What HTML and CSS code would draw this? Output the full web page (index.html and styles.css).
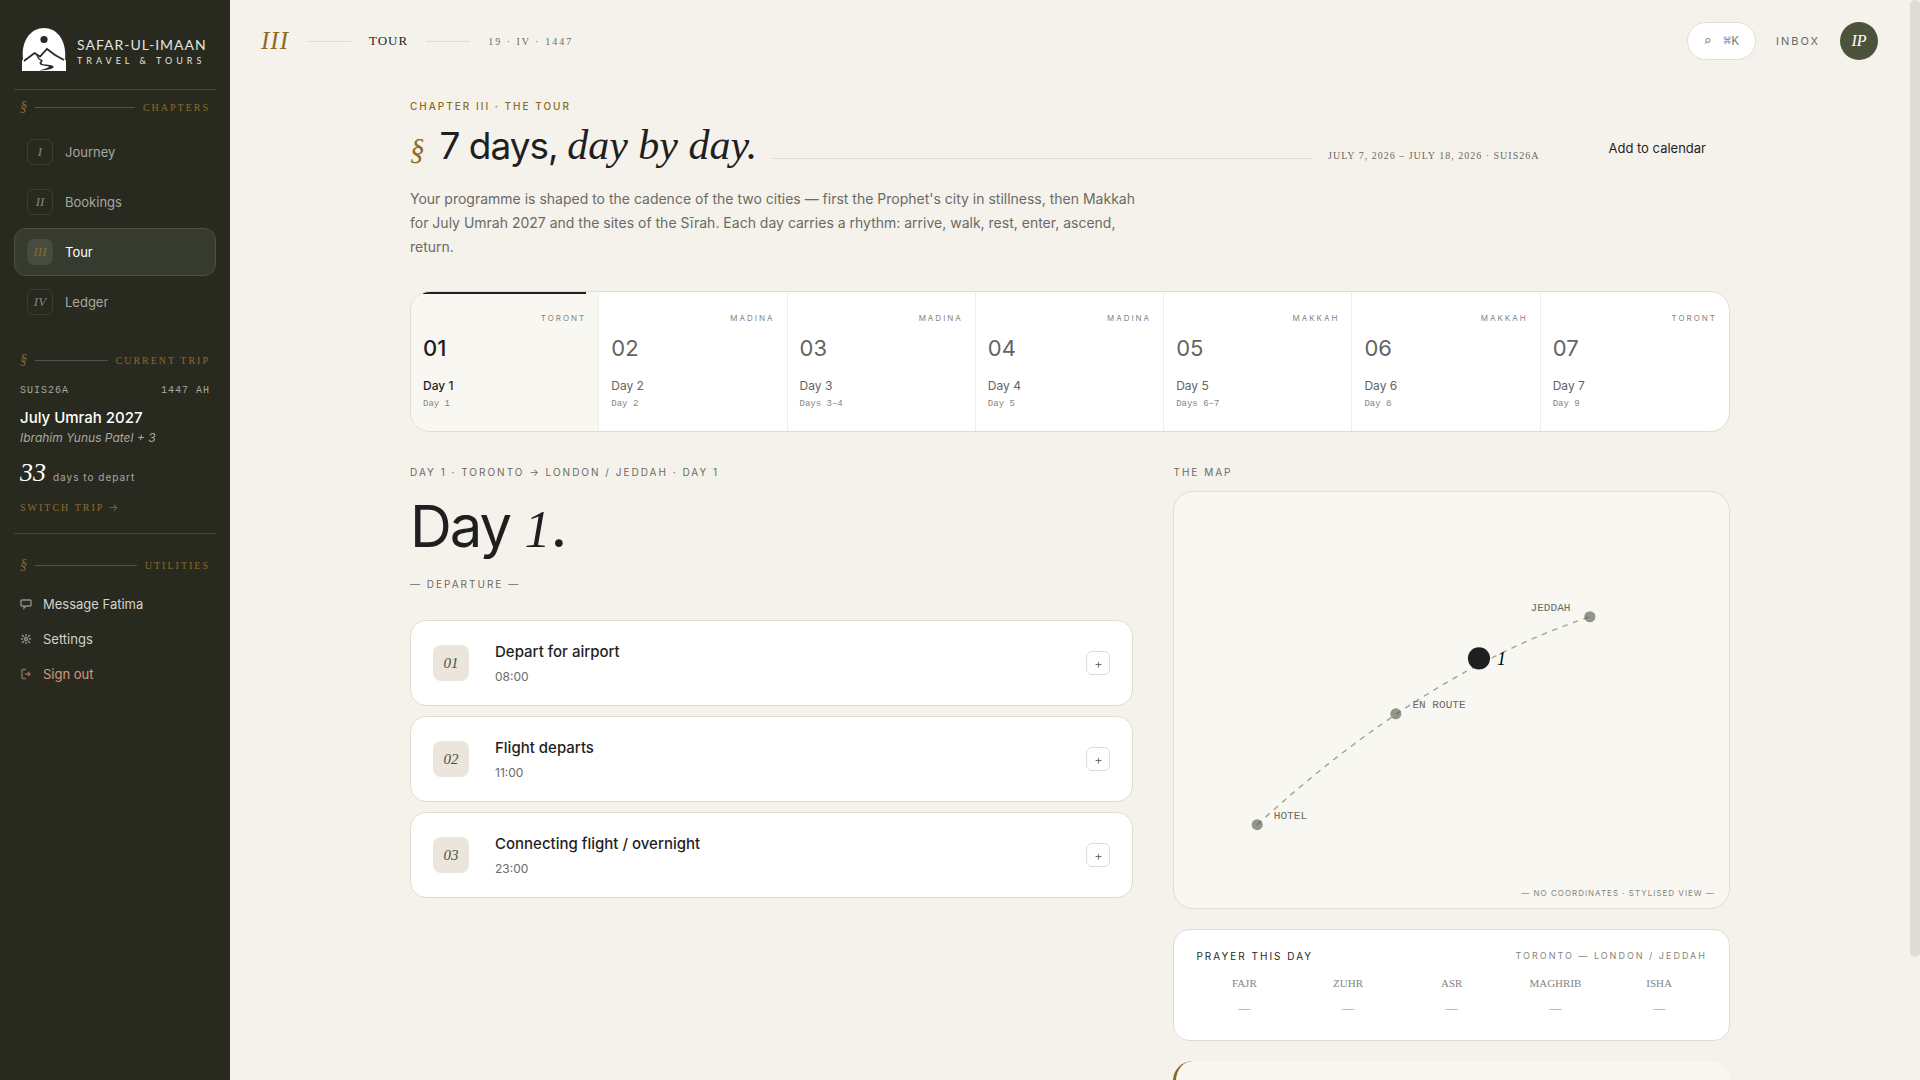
FILE: index.html
```html
<!DOCTYPE html>
<html lang="en">
<head>
    <meta charset="UTF-8">
    <meta name="viewport" content="width=device-width, initial-scale=1.0">
    <title>Tour - Safar-ul-Imaan</title>
    <link rel="stylesheet" href="styles.css">
</head>
<body>

<div class="app">
    <aside class="sidebar">
        <a class="logo" href="#">
            <svg class="logo-mark" viewBox="0 0 44 43" aria-hidden="true">
                <path d="M0 43V33L1 31C-1 14 8 0 22 0S45 14 43 31L44 33V43Z" fill="#fff"/>
                <circle cx="22" cy="11.5" r="3.6" fill="#282a20"/>
                <path d="M2 33L12.5 25L18 28.5L25 21L33 27L42 32" fill="none" stroke="#282a20" stroke-width="1.8"/>
                <path d="M14 26L18 31Q22 32 20 34Q18 36 24 36.5Q34 37 31 40Q27 42 17 42.5Q27 40 27 38.5Q25 38 19 37Q16 35 19 33Q15 31 14 26Z" fill="#282a20"/>
            </svg>
            <span class="logo-text">
                <span class="logo-name">SAFAR-UL-IMAAN</span>
                <span class="logo-sub">TRAVEL &amp; TOURS</span>
            </span>
        </a>

        <div class="section-label first"><i>§</i><span class="rule"></span><span>CHAPTERS</span></div>
        <nav class="chapters">
            <a href="#"><span class="numeral">I</span>Journey</a>
            <a href="#"><span class="numeral">II</span>Bookings</a>
            <a href="#" class="active"><span class="numeral">III</span>Tour</a>
            <a href="#"><span class="numeral">IV</span>Ledger</a>
        </nav>

        <div class="section-label"><i>§</i><span class="rule"></span><span>CURRENT TRIP</span></div>
        <div class="trip">
            <div class="trip-meta"><span>SUIS26A</span><span>1447 AH</span></div>
            <div class="trip-name">July Umrah 2027</div>
            <div class="trip-people">Ibrahim Yunus Patel + 3</div>
            <div class="countdown"><span class="countdown-num">33</span>days to depart</div>
            <a class="switch" href="#">SWITCH TRIP <span class="arrow">→</span></a>
        </div>

        <div class="section-label"><i>§</i><span class="rule"></span><span>UTILITIES</span></div>
        <nav class="utilities">
            <a href="#">
                <svg viewBox="0 0 12 12"><path d="M2 2h8q1 0 1 1v4q0 1-1 1H6L4 10V8H2Q1 8 1 7V3q0-1 1-1z"/></svg>
                Message Fatima
            </a>
            <a href="#">
                <svg viewBox="0 0 12 12"><circle cx="6" cy="6" r="1.5"/><path d="M6 1v2M6 9v2M1 6h2M9 6h2M2 2l2 2M8 8l2 2M10 2l-2 2M4 8l-2 2"/></svg>
                Settings
            </a>
            <a href="#" class="signout">
                <svg viewBox="0 0 12 12"><path d="M6 1.5H3Q2 1.5 2 2.5v7q0 1 1 1h3M5 6h5M8 4l2 2-2 2"/></svg>
                Sign out
            </a>
        </nav>
    </aside>

    <main class="main">
        <header class="topbar">
            <span class="topbar-num">III</span>
            <span class="tick"></span>
            <span class="topbar-title">TOUR</span>
            <span class="tick"></span>
            <span class="topbar-date">19 · IV · 1447</span>
            <div class="topbar-actions">
                <button class="search" type="button" aria-label="Search"><span>⌕</span><span>⌘K</span></button>
                <a class="inbox" href="#">INBOX</a>
                <button class="avatar" type="button">IP</button>
            </div>
        </header>

        <div class="content">
            <p class="eyebrow gold">CHAPTER III · THE TOUR</p>
            <div class="page-head">
                <span class="mark">§</span>
                <h1>7 days, <em>day by day.</em></h1>
                <span class="rule"></span>
                <span class="dates">JULY 7, 2026 – JULY 18, 2026 · SUIS26A</span>
                <button class="calendar" type="button">Add to calendar</button>
            </div>
            <p class="lede">Your programme is shaped to the cadence of the two cities — first the Prophet's city in stillness, then Makkah for July Umrah 2027 and the sites of the Sīrah. Each day carries a rhythm: arrive, walk, rest, enter, ascend, return.</p>

            <div class="days">
                <button type="button" class="day active"><span class="city">TORONT</span><span class="num">01</span><span class="name">Day 1</span><span class="range">Day 1</span></button>
                <button type="button" class="day"><span class="city">MADINA</span><span class="num">02</span><span class="name">Day 2</span><span class="range">Day 2</span></button>
                <button type="button" class="day"><span class="city">MADINA</span><span class="num">03</span><span class="name">Day 3</span><span class="range">Days 3–4</span></button>
                <button type="button" class="day"><span class="city">MADINA</span><span class="num">04</span><span class="name">Day 4</span><span class="range">Day 5</span></button>
                <button type="button" class="day"><span class="city">MAKKAH</span><span class="num">05</span><span class="name">Day 5</span><span class="range">Days 6–7</span></button>
                <button type="button" class="day"><span class="city">MAKKAH</span><span class="num">06</span><span class="name">Day 6</span><span class="range">Day 8</span></button>
                <button type="button" class="day"><span class="city">TORONT</span><span class="num">07</span><span class="name">Day 7</span><span class="range">Day 9</span></button>
            </div>

            <div class="columns">
                <section>
                    <p class="eyebrow">DAY 1 · TORONTO → LONDON / JEDDAH · DAY 1</p>
                    <h2>Day <em>1</em>.</h2>
                    <p class="eyebrow">— DEPARTURE —</p>
                    <div class="events">
                        <div class="event">
                            <span class="badge">01</span>
                            <div class="event-text"><h3>Depart for airport</h3><p>08:00</p></div>
                            <button type="button" aria-label="Expand">+</button>
                        </div>
                        <div class="event">
                            <span class="badge">02</span>
                            <div class="event-text"><h3>Flight departs</h3><p>11:00</p></div>
                            <button type="button" aria-label="Expand">+</button>
                        </div>
                        <div class="event">
                            <span class="badge">03</span>
                            <div class="event-text"><h3>Connecting flight / overnight</h3><p>23:00</p></div>
                            <button type="button" aria-label="Expand">+</button>
                        </div>
                    </div>
                </section>

                <section>
                    <p class="eyebrow">THE MAP</p>
                    <div class="map">
                        <svg viewBox="0 0 400 300">
                            <g fill="#949686">
                                <circle cx="60" cy="240" r="4"/>
                                <circle cx="160" cy="160" r="4"/>
                                <circle cx="300" cy="90" r="4"/>
                            </g>
                            <path d="M60 240Q180 130 300 90" fill="none" stroke="#4d523b" stroke-opacity=".5" stroke-dasharray="4 4"/>
                            <circle cx="220" cy="120" r="8" fill="#1f1f1f"/>
                            <g class="map-label">
                                <text x="72" y="236">HOTEL</text>
                                <text x="172" y="156">EN ROUTE</text>
                                <text x="286" y="86" text-anchor="end">JEDDAH</text>
                            </g>
                            <text class="map-num" x="233" y="125">1</text>
                        </svg>
                        <span class="map-note">— NO COORDINATES · STYLISED VIEW —</span>
                    </div>

                    <div class="prayer">
                        <div class="prayer-head"><span>PRAYER THIS DAY</span><span class="place">TORONTO — LONDON / JEDDAH</span></div>
                        <table>
                            <thead><tr><th>FAJR</th><th>ZUHR</th><th>ASR</th><th>MAGHRIB</th><th>ISHA</th></tr></thead>
                            <tbody><tr><td>—</td><td>—</td><td>—</td><td>—</td><td>—</td></tr></tbody>
                        </table>
                    </div>

                    <div class="note"></div>
                </section>
            </div>
        </div>
    </main>
    <div class="scrollbar"><div class="thumb"></div></div>
</div>

</body>
</html>
```
FILE: styles.css
```css
* {
    box-sizing: border-box;
}
body {
    margin: 0;
    background: #f5f2eb;
    color: #1f1f1f;
    font-family: Inter, sans-serif;
    font-size: 13px;
}
a {
    color: inherit;
    text-decoration: none;
}
button {
    font: inherit;
    color: inherit;
    cursor: pointer;
}
h1, h2, h3, p {
    margin: 0;
}
.app {
    display: flex;
    height: 100vh;
}

/* sidebar */
.sidebar {
    width: 230px;
    flex-shrink: 0;
    padding: 28px 14px;
    background: #282a20;
    color: #a8a79f;
}
.logo {
    display: flex;
    align-items: center;
    gap: 11px;
    padding: 0 8px 18px;
    border-bottom: 1px solid #454834;
}
.logo-mark {
    width: 44px;
    height: 43px;
}
.logo-text {
    display: flex;
    flex-direction: column;
    gap: 2px;
    margin-top: 4px;
    font-family: Lato, sans-serif;
    color: #e4e3df;
    white-space: nowrap;
}
.logo-name {
    font-size: 14px;
    line-height: 16px;
    letter-spacing: 1px;
}
.logo-sub {
    font-size: 9px;
    line-height: 12px;
    letter-spacing: 4px;
}
.section-label {
    display: flex;
    align-items: center;
    gap: 8px;
    padding: 0 6px;
    height: 20px;
    color: #8b6b2b;
    font-family: "Liberation Serif", serif;
    font-size: 10px;
    letter-spacing: 2px;
}
.section-label.first {
    margin-top: 7px;
}
.section-label i {
    font-size: 14px;
    letter-spacing: 0;
}
.section-label .rule {
    flex: 1;
    height: 1px;
    background: #50534a;
}
.chapters {
    display: flex;
    flex-direction: column;
    gap: 2px;
    margin: 11px 0 24px;
}
.chapters a {
    display: flex;
    align-items: center;
    gap: 12px;
    height: 48px;
    padding: 0 12px;
    border: 1px solid transparent;
    border-radius: 12px;
    font-size: 13px;
}
.chapters .active {
    background: #373a2f;
    border-color: #4d513d;
    color: #fff;
}
.numeral {
    display: flex;
    align-items: center;
    justify-content: center;
    width: 26px;
    height: 26px;
    border: 1px solid #3c3f2e;
    border-radius: 7px;
    font-family: "Liberation Serif", serif;
    font-style: italic;
    font-size: 13px;
    color: #85857c;
}
.active .numeral {
    background: #484b3f;
    border-color: #484b3f;
    color: #8b6b2b;
}
.trip {
    padding: 12px 6px 16px;
    margin-bottom: 21px;
    border-bottom: 1px solid #454834;
}
.trip-meta {
    display: flex;
    justify-content: space-between;
    font-family: "Liberation Mono", monospace;
    font-size: 10px;
    line-height: 18px;
    letter-spacing: 1px;
}
.trip-name {
    margin-top: 7px;
    color: #fff;
    font-size: 15px;
    line-height: 22px;
    font-weight: 500;
}
.trip-people {
    font-size: 12px;
    line-height: 18px;
    font-style: italic;
}
.countdown {
    display: flex;
    align-items: baseline;
    gap: 7px;
    margin: 12px 0 7px;
    font-size: 10px;
    line-height: 28px;
    letter-spacing: 1px;
}
.countdown-num {
    color: #fff;
    font-family: "Liberation Serif", serif;
    font-style: italic;
    font-size: 26px;
    letter-spacing: 0;
}
.switch {
    color: #8b6b2b;
    font-family: "Liberation Serif", serif;
    font-size: 10px;
    line-height: 18px;
    letter-spacing: 2px;
}
.arrow {
    font-family: Inter, sans-serif;
}
.utilities {
    margin-top: 11px;
}
.utilities a {
    display: flex;
    align-items: center;
    gap: 11px;
    height: 35px;
    padding: 0 6px;
    color: #d3d2cc;
    font-size: 13px;
}
.utilities svg {
    width: 12px;
    height: 12px;
    fill: none;
    stroke: currentColor;
    stroke-width: 1.4;
    opacity: .6;
}
.utilities .signout {
    color: #d9977a;
}

/* main area */
.main {
    flex: 1;
    min-width: 0;
    overflow-y: auto;
    scrollbar-width: none;
}
.scrollbar {
    width: 10px;
}
.thumb {
    height: 88.6%;
    background: #dfdbd3;
    border-radius: 5px;
}
.topbar {
    display: flex;
    align-items: center;
    gap: 18px;
    height: 82px;
    padding: 0 32px 0 31px;
    font-family: "Liberation Serif", serif;
}
.topbar-num {
    font-style: italic;
    font-size: 25px;
    letter-spacing: 1px;
    color: #8b6b23;
}
.tick {
    width: 44px;
    height: 1px;
    background: #dfdcd3;
}
.topbar-title {
    font-size: 13px;
    letter-spacing: 1px;
}
.topbar-date {
    font-size: 10px;
    letter-spacing: 2px;
    color: #6b6a65;
}
.topbar-actions {
    display: flex;
    align-items: center;
    gap: 20px;
    margin-left: auto;
}
.search {
    display: flex;
    align-items: center;
    gap: 12px;
    height: 38px;
    padding: 0 16px;
    border: 1px solid #e3dfd6;
    border-radius: 19px;
    background: #fff;
    color: #85847f;
    font-family: "Liberation Mono", monospace;
    font-size: 13px;
}
.inbox {
    font-family: Inter, sans-serif;
    font-size: 11px;
    letter-spacing: 2px;
    color: #6b6a65;
}
.avatar {
    width: 38px;
    height: 38px;
    padding: 0;
    border: 0;
    border-radius: 50%;
    background: #4d523b;
    color: #fff;
    font-style: italic;
    font-size: 16px;
}
.content {
    max-width: 1384px;
    margin: 0 auto;
    padding: 16px 32px 60px;
}
.eyebrow {
    font-size: 10px;
    line-height: 16px;
    letter-spacing: 2px;
    color: #6b6a65;
}
.eyebrow.gold {
    color: #8b6b23;
    font-weight: 500;
}
.page-head {
    display: flex;
    align-items: baseline;
    gap: 15px;
    padding-top: 7px;
}
.mark {
    font-family: "Liberation Serif", serif;
    font-style: italic;
    font-size: 29px;
    color: #8b6b23;
}
h1, h2 {
    font-weight: 400;
    letter-spacing: -1px;
}
h1 {
    font-size: 37px;
    line-height: 50px;
}
h1 em, h2 em {
    font-family: "Liberation Serif", serif;
    letter-spacing: 0;
    line-height: 1;
}
h1 em {
    font-size: 42px;
}
h2 em {
    font-size: 52px;
}
.page-head .rule {
    flex: 1;
    height: 1px;
    background: #dfdcd3;
}
.dates {
    font-family: "Liberation Serif", serif;
    font-size: 10px;
    letter-spacing: 1px;
    color: #6b6a65;
}
.calendar {
    align-self: center;
    margin: 4px 0 0 30px;
    padding: 10px 24px;
    border: 0;
    background: none;
    font-size: 13px;
}
.lede {
    max-width: 730px;
    margin-top: 16px;
    font-size: 14px;
    line-height: 24px;
    color: #6b6a65;
}
.days {
    display: grid;
    grid-template-columns: repeat(7, 1fr);
    margin-top: 32px;
    overflow: hidden;
    border: 1px solid #dfddd3;
    border-radius: 20px;
    background: #fff;
}
.day {
    position: relative;
    display: flex;
    flex-direction: column;
    padding: 18px 12px;
    border: 0;
    border-right: 1px solid #efeeea;
    background: none;
    text-align: left;
    color: #65645f;
}
.day:last-child {
    border-right: 0;
}
.day.active {
    background: #f8f7f2;
    color: #1f1f1f;
}
.day.active::before {
    content: "";
    position: absolute;
    top: 0;
    left: 12px;
    right: 12px;
    height: 2px;
    background: #1f1f1f;
}
.city {
    align-self: flex-end;
    font-size: 8px;
    line-height: 16px;
    letter-spacing: 2px;
    color: #85847f;
}
.num {
    margin-top: 8px;
    font-size: 22px;
    line-height: 28px;
}
.name {
    margin-top: 15px;
    font-size: 12px;
    line-height: 18px;
}
.range {
    font-family: "Liberation Mono", monospace;
    font-size: 9px;
    line-height: 18px;
    color: #85847f;
}
.day.active .num, .day.active .name {
    font-weight: 500;
}
.columns {
    display: grid;
    grid-template-columns: 13fr 10fr;
    gap: 40px;
    margin-top: 32px;
}
h2 {
    margin: 12px 0 16px;
    font-size: 58px;
    line-height: 68px;
    letter-spacing: -2px;
}
.events {
    display: flex;
    flex-direction: column;
    gap: 10px;
    margin-top: 28px;
}
.event {
    display: flex;
    align-items: center;
    padding: 17px 22px;
    border: 1px solid #dfdcd3;
    border-radius: 16px;
    background: #fff;
}
.badge {
    width: 36px;
    border-radius: 8px;
    background: #eae6db;
    color: #4d523b;
    font-family: "Liberation Serif", serif;
    font-style: italic;
    font-size: 15px;
    line-height: 36px;
    text-align: center;
}
.event-text {
    flex: 1;
    margin-left: 26px;
}
.event h3 {
    font-size: 15px;
    line-height: 28px;
    font-weight: 500;
}
.event p {
    font-size: 12px;
    line-height: 22px;
    color: #6b6a65;
}
.event button {
    width: 24px;
    height: 24px;
    padding: 0;
    border: 1px solid #dfdcd3;
    border-radius: 6px;
    background: #fff;
    font-size: 12px;
    color: #6b6a65;
}
.map {
    position: relative;
    margin-top: 11px;
    border: 1px solid #dfdcd3;
    border-radius: 20px;
    background: #f8f7f2;
}
.map svg {
    display: block;
}
.map-label {
    font-family: "Liberation Mono", monospace;
    font-size: 8px;
    fill: #6b6a65;
}
.map-num {
    font-family: "Liberation Serif", serif;
    font-style: italic;
    font-size: 13px;
}
.map-note {
    position: absolute;
    right: 14px;
    bottom: 10px;
    font-size: 8px;
    letter-spacing: 1px;
    color: #85847f;
}
.prayer {
    margin-top: 20px;
    padding: 18px 22px;
    border: 1px solid #dfdcd3;
    border-radius: 16px;
    background: #fff;
}
.prayer-head {
    display: flex;
    justify-content: space-between;
    font-size: 10px;
    line-height: 16px;
    letter-spacing: 2px;
}
.place {
    font-size: 9px;
    color: #85847f;
}
.prayer table {
    width: calc(100% + 8px);
    margin: 8px -4px 0;
    table-layout: fixed;
    border-collapse: collapse;
    text-align: center;
    font-family: "Liberation Serif", serif;
    color: #85847f;
}
.prayer th {
    padding: 0;
    font-size: 11px;
    font-weight: 400;
    line-height: 22px;
}
.prayer td {
    padding: 0;
    font-size: 12px;
    line-height: 28px;
}
.note {
    margin-top: 20px;
    height: 99px;
    border-left: 3px solid #8b6b23;
    border-radius: 20px;
    background: #f8f7f2;
}
```
